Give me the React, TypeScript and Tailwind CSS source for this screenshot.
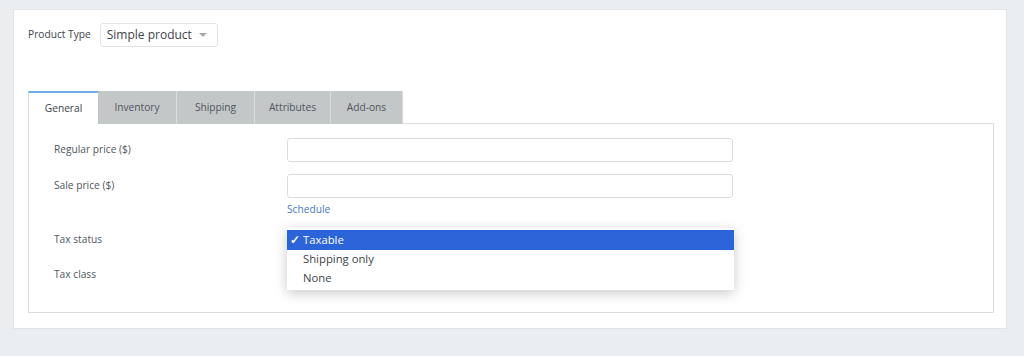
export default function App() {
  const tabs = ["Inventory", "Shipping", "Attributes", "Add-ons"];

  return (
    <div className="min-h-[356px] w-[1024px] bg-[#ebeef0] px-[13px] pt-[9px] font-['Open_Sans',sans-serif] text-[#50575e]">
      <div className="h-[320px] w-[994px] border border-[#e1e4e6] bg-white px-[14px] pt-[13px]">
        {/* product type */}
        <div className="flex items-center gap-[9px]">
          <span className="text-[10.2px] text-[#3c434a]">Product Type</span>
          <div className="flex h-[24px] w-[118px] items-center justify-between rounded-[3px] border border-[#e2e4e7] pl-[6px] pr-[10px] text-[12px] text-[#3c434a]">
            <span>Simple product</span>
            <svg width="8" height="5" viewBox="0 0 8 5">
              <path d="M0 0 L8 0 L4 4 Z" fill="#a7aaad" />
            </svg>
          </div>
        </div>

        {/* tabs */}
        <div className="mt-[44px] flex h-[33px] text-[10.2px]">
          <div className="relative z-10 flex w-[70px] items-center justify-center border-t-2 border-l border-t-[#72aee6] border-l-[#dcdcde] bg-white text-[#3c434a]">
            General
          </div>
          {tabs.map((t) => (
            <div
              key={t}
              className={
                "flex items-center justify-center border-r border-[#dcdcde] bg-[#c4c7c8] text-[#50575e] " +
                (t === "Inventory" ? "w-[79px]" : t === "Shipping" ? "w-[78px]" : t === "Attributes" ? "w-[76px]" : "w-[72px]")
              }
            >
              {t}
            </div>
          ))}
        </div>

        {/* panel */}
        <div className="-mt-px h-[190px] w-[966px] border border-[#dcdcde] pl-[25px] pt-[14px] text-[10.2px]">
          <div className="flex h-[24px] items-center">
            <span className="w-[233px] text-[#50575e]">Regular price ($)</span>
            <div className="h-[24px] w-[446px] rounded-[3px] border border-[#dcdcde]" />
          </div>
          <div className="mt-[12px] flex h-[24px] items-center">
            <span className="w-[233px]">Sale price ($)</span>
            <div className="h-[24px] w-[446px] rounded-[3px] border border-[#dcdcde]" />
          </div>
          <div className="ml-[233px] mt-[4px] text-[10.2px] text-[#3f7cc0]">Schedule</div>

          <div className="relative mt-[10px] flex h-[24px] items-center">
            <span className="w-[233px]">Tax status</span>
            <div className="absolute left-[233px] top-[1px] z-20 w-[447px] bg-white pb-[2px] pt-[2px] text-[11.3px] text-[#3c434a] shadow-[0_3px_12px_rgba(0,0,0,0.22)]">
              <div className="flex h-[20px] items-center bg-[#2b64d9] pl-[3px] text-white">
                <span className="w-[13px] text-[12px] font-bold">✓</span>
                <span>Taxable</span>
              </div>
              <div className="flex h-[19px] items-center pl-[16px]">Shipping only</div>
              <div className="flex h-[19px] items-center pl-[16px]">None</div>
            </div>
          </div>
          <div className="mt-[11px] flex h-[24px] items-center">
            <span className="w-[233px]">Tax class</span>
          </div>
        </div>
      </div>
    </div>
  );
}
